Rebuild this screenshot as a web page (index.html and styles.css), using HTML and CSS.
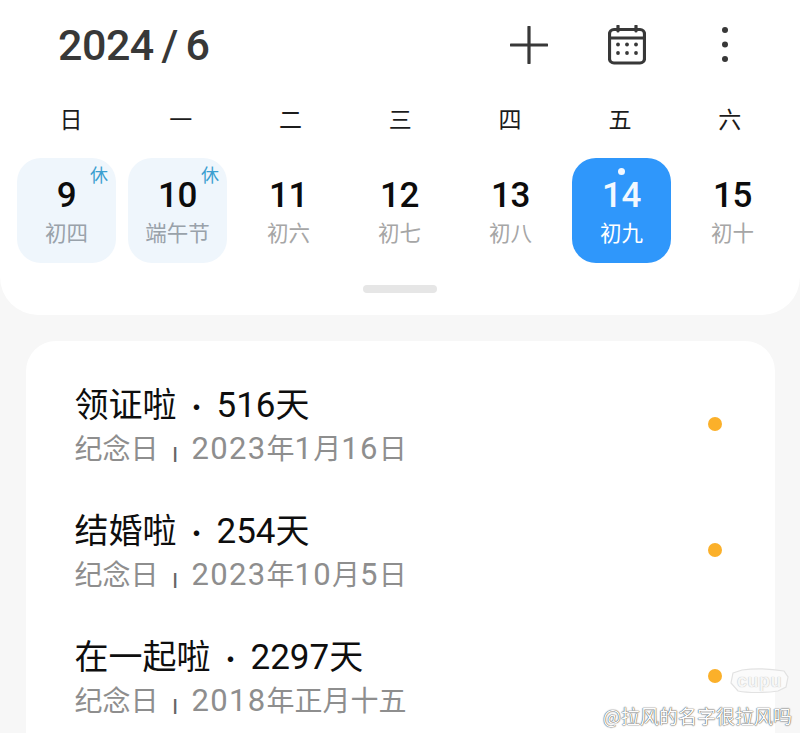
FILE: index.html
```html
<!DOCTYPE html>
<html lang="zh-CN">
<head>
<meta charset="utf-8">
<title>日历</title>
<link rel="stylesheet" href="styles.css">
</head>
<body>
<div class="page">
  <section class="panel">
    <header class="top">
      <h1 class="month">2024 / 6</h1>
      <div class="actions">
        <svg class="ico plus" viewBox="0 0 38 38"><path d="M19 1V37M1 19H37"/></svg>
        <svg class="ico cal" viewBox="0 0 38 40">
          <rect x="1.5" y="4.500" width="35" height="33.500" rx="4.500"/>
          <path d="M1.500 13H36.500M10 1V6M28 1V6"/>
          <g class="dots"><circle cx="10" cy="19.500" r="1.900"/><circle cx="19" cy="19.500" r="1.900"/><circle cx="28" cy="19.500" r="1.900"/><circle cx="10" cy="28" r="1.900"/><circle cx="19" cy="28" r="1.900"/><circle cx="28" cy="28" r="1.900"/></g>
        </svg>
        <svg class="ico more" viewBox="0 0 8 38"><circle cx="4" cy="4" r="3"/><circle cx="4" cy="18.500" r="3"/><circle cx="4" cy="33" r="3"/></svg>
      </div>
    </header>
    <div class="week">
      <span>日</span><span>一</span><span>二</span><span>三</span><span>四</span><span>五</span><span>六</span>
    </div>
    <div class="days">
      <div class="day off"><b>9</b><small>初四</small><i class="rest">休</i></div>
      <div class="day off"><b>10</b><small>端午节</small><i class="rest">休</i></div>
      <div class="day"><b>11</b><small>初六</small></div>
      <div class="day"><b>12</b><small>初七</small></div>
      <div class="day"><b>13</b><small>初八</small></div>
      <div class="day today"><i class="pip"></i><b>14</b><small>初九</small></div>
      <div class="day"><b>15</b><small>初十</small></div>
    </div>
    <div class="handle"></div>
  </section>
  <section class="card">
    <article class="event">
      <div class="ev-text"><h2>领证啦<span class="sep">·</span><span class="num">516</span>天</h2><p>纪念日<span class="bar">|</span><span class="num">2023</span>年<span class="num">1</span>月<span class="num">16</span>日</p></div>
      <i class="dot"></i>
    </article>
    <article class="event">
      <div class="ev-text"><h2>结婚啦<span class="sep">·</span><span class="num">254</span>天</h2><p>纪念日<span class="bar">|</span><span class="num">2023</span>年<span class="num">10</span>月<span class="num">5</span>日</p></div>
      <i class="dot"></i>
    </article>
    <article class="event">
      <div class="ev-text"><h2>在一起啦<span class="sep">·</span><span class="num">2297</span>天</h2><p>纪念日<span class="bar">|</span><span class="num">2018</span>年正月十五</p></div>
      <i class="dot"></i>
    </article>
  </section>
  <div class="mark">
    <svg class="logo" viewBox="0 0 62 26"><path d="M5 5L14 2C28 0 44 1 56 3L60 9L58 19L50 23C38 25 20 25 10 23L3 15Z"/></svg>
    <span class="logo-text">cupu</span>
    <span class="mark-text">@拉风的名字很拉风吗</span>
  </div>
</div>
</body>
</html>
```
FILE: styles.css
```css
* { box-sizing: border-box; }
html, body { margin: 0; height: 100%; }
body {
  background: #f7f7f7;
  font-family: "Noto Sans CJK SC", "Noto Sans", sans-serif;
  overflow: hidden;
}
.page { position: relative; width: 800px; height: 733px; overflow: hidden; }
.panel {
  background: #fff;
  height: 315px;
  border-radius: 0 0 38px 38px;
  padding: 16px 0 0;
  display: flex;
  flex-direction: column;
}
.top {
  display: flex;
  align-items: center;
  justify-content: space-between;
  padding: 0 71px 0 58px;
  height: 58px;
}
.month {
  margin: 0;
  font-family: Roboto, "Noto Sans", sans-serif;
  font-size: 43px;
  font-weight: 500;
  letter-spacing: -0.5px;
  word-spacing: -2.500px;
  color: #383838;
}
.actions { display: flex; align-items: center; gap: 60px; }
.ico { display: block; fill: none; stroke: #383838; stroke-width: 3.200; stroke-linecap: round; }
.plus { width: 38px; height: 38px; }
.cal { width: 38px; height: 40px; }
.cal .dots circle, .more circle { fill: #383838; stroke: none; }
.more { width: 8px; height: 38px; margin-left: 15px; }
.week {
  display: grid;
  grid-template-columns: repeat(7, 109.800px);
  padding-left: 16px;
  margin-top: 29px;
  height: 30px;
  line-height: 30px;
  text-align: center;
  font-size: 23px;
  color: #1c1c1c;
}
.days {
  display: grid;
  grid-template-columns: repeat(7, 99px);
  gap: 12px;
  padding-left: 17px;
  margin-top: 25px;
}
.day {
  position: relative;
  height: 105px;
  border-radius: 24px;
  display: flex;
  flex-direction: column;
  align-items: center;
  padding-top: 17px;
}
.day b {
  font-family: Roboto, sans-serif;
  font-weight: 500;
  font-size: 35px;
  line-height: 42px;
  letter-spacing: -0.5px;
  color: #0c0c0c;
}
.day small {
  font-size: 21.500px;
  line-height: 30px;
  color: #a6a6a6;
}
.off { background: #eff6fc; }
.off small { color: #99a2aa; }
.today { background: #2f97fb; }
.today b, .today small { color: #fff; }
.today b { color: #f2f8ff; }
.rest {
  position: absolute;
  top: 4px;
  right: 8px;
  font-style: normal;
  font-size: 18px;
  line-height: 24px;
  color: #3c9fd0;
}
.pip {
  position: absolute;
  top: 10px;
  left: 46px;
  width: 7px;
  height: 7px;
  border-radius: 50%;
  background: #f2f8ff;
}
.handle {
  width: 74px;
  height: 8px;
  border-radius: 4px;
  background: #e6e6e6;
  margin: 22px 0 0 363px;
}
.card {
  margin: 26px 25px 0 26px;
  height: 460px;
  background: #fff;
  border-radius: 30px;
  padding: 39px 53px 0 48.500px;
}
.event {
  display: flex;
  align-items: center;
  justify-content: space-between;
  height: 126px;
}
.ev-text { height: 126px; }
.event h2 {
  margin: 0;
  font-weight: 400;
  font-size: 34px;
  line-height: 46px;
  height: 46px;
  color: #0e0e0e;
}
.event p {
  margin: 1px 0 0;
  font-size: 28px;
  line-height: 40px;
  height: 40px;
  color: #8e8e8e;
}
.num {
  font-family: Roboto, sans-serif;
  line-height: 1;
}
h2 .num { font-size: 35px; }
p .num { font-size: 31px; letter-spacing: 1.300px; }
.sep {
  display: inline-block;
  width: 40px;
  text-align: center;
  font-size: 26px;
  line-height: 1;
}
.bar {
  display: inline-block;
  width: 33px;
  text-align: center;
  font-family: "Liberation Sans", sans-serif;
  font-size: 17px;
  font-weight: 700;
  line-height: 1;
  color: #666;
}
.dot {
  width: 14px;
  height: 14px;
  border-radius: 50%;
  background: #fbb02a;
  margin-top: -38px;
}
.mark { position: absolute; inset: 0; pointer-events: none; }
.logo {
  position: absolute;
  left: 728px;
  top: 668px;
  width: 62px;
  height: 26px;
  fill: #fbfbfb;
  stroke: #e2e2e2;
  stroke-width: 1.200;
}
.logo-text {
  position: absolute;
  left: 737px;
  top: 670px;
  font: 700 18px/22px "Liberation Sans", sans-serif;
  letter-spacing: 0.500px;
  color: #f6f6f6;
  text-shadow: 0 0 1px #aaa;
}
.mark-text {
  position: absolute;
  left: 603px;
  top: 703px;
  font-size: 19px;
  line-height: 26px;
  color: #fdfdfd;
  text-shadow: 0 0 1.200px #333, 0 0 1px #666;
}
```
